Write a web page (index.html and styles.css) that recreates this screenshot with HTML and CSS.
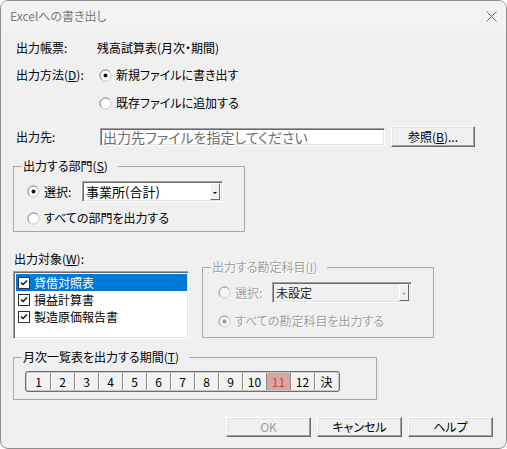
FILE: index.html
```html
<!DOCTYPE html>
<html lang="ja">
<head>
<meta charset="utf-8">
<title>Excelへの書き出し</title>
<link rel="stylesheet" href="styles.css">
</head>
<body>
<div class="window">
  <div class="titlebar">
    <span class="title">Excelへの書き出し</span>
    <svg class="close" width="11" height="11" viewBox="0 0 11 11"><path d="M0.5 0.5L10.5 10.5M10.5 0.5L0.5 10.5" stroke="#707070" stroke-width="1" fill="none"/></svg>
  </div>
  <div class="content">
    <div class="row r1"><span class="lbl">出力帳票:</span><span class="val">残高試算表(月次・期間)</span></div>
    <div class="row r2"><span class="lbl">出力方法(<u>D</u>):</span>
      <span class="radio"><svg width="13" height="13" viewBox="0 0 13 13"><circle cx="6.5" cy="6.5" r="5.5" fill="#fff" stroke="#c4c4c4"/><path d="M2.6 10.4A5.5 5.5 0 0 1 10.4 2.6" stroke="#8a8a8a" fill="none"/><circle cx="6.5" cy="6.5" r="2" fill="#111"/></svg>新規ファイルに書き出す</span></div>
    <div class="row r3"><span class="lbl"></span>
      <span class="radio"><svg width="13" height="13" viewBox="0 0 13 13"><circle cx="6.5" cy="6.5" r="5.5" fill="#fff" stroke="#c4c4c4"/><path d="M2.6 10.4A5.5 5.5 0 0 1 10.4 2.6" stroke="#8a8a8a" fill="none"/></svg>既存ファイルに追加する</span></div>
    <div class="row r4"><span class="lbl">出力先:</span>
      <div class="input sunken">出力先ファイルを指定してください</div>
      <div class="btn btn-browse">参照(<u>B</u>)...</div>
    </div>

    <fieldset class="group dept">
      <legend>出力する部門(<u>S</u>)</legend>
      <div class="gbody">
        <div class="grow combo-row">
          <span class="radio rsel"><svg width="13" height="13" viewBox="0 0 13 13"><circle cx="6.5" cy="6.5" r="5.5" fill="#fff" stroke="#c4c4c4"/><path d="M2.6 10.4A5.5 5.5 0 0 1 10.4 2.6" stroke="#8a8a8a" fill="none"/><circle cx="6.5" cy="6.5" r="2" fill="#111"/></svg>選択:</span>
          <div class="combo sunken"><span class="ctext big">事業所(合計)</span><span class="cbtn"><i class="tri"></i></span></div>
        </div>
        <div class="grow r-all">
          <span class="radio"><svg width="13" height="13" viewBox="0 0 13 13"><circle cx="6.5" cy="6.5" r="5.5" fill="#fff" stroke="#c4c4c4"/><path d="M2.6 10.4A5.5 5.5 0 0 1 10.4 2.6" stroke="#8a8a8a" fill="none"/></svg>すべての部門を出力する</span>
        </div>
      </div>
    </fieldset>

    <div class="lower">
      <div class="targets">
        <div class="tlabel">出力対象(<u>W</u>):</div>
        <div class="listbox sunken">
          <div class="item sel"><svg class="chk" width="12" height="12" viewBox="0 0 12 12"><rect x="0.5" y="0.5" width="11" height="11" fill="#fff" stroke="#333"/><path d="M3 5.5L5 7.5L9 3.5" stroke="#111" stroke-width="1.4" fill="none"/></svg>貸借対照表</div>
          <div class="item"><svg class="chk" width="12" height="12" viewBox="0 0 12 12"><rect x="0.5" y="0.5" width="11" height="11" fill="#fff" stroke="#333"/><path d="M3 5.5L5 7.5L9 3.5" stroke="#111" stroke-width="1.4" fill="none"/></svg>損益計算書</div>
          <div class="item"><svg class="chk" width="12" height="12" viewBox="0 0 12 12"><rect x="0.5" y="0.5" width="11" height="11" fill="#fff" stroke="#333"/><path d="M3 5.5L5 7.5L9 3.5" stroke="#111" stroke-width="1.4" fill="none"/></svg>製造原価報告書</div>
        </div>
      </div>
      <fieldset class="group acct disabled">
        <legend>出力する勘定科目(<u>I</u>)</legend>
        <div class="gbody">
          <div class="grow combo-row">
            <span class="radio rsel"><svg width="13" height="13" viewBox="0 0 13 13"><circle cx="6.5" cy="6.5" r="5.5" fill="#f4f4f4" stroke="#cfcfcf"/><path d="M2.6 10.4A5.5 5.5 0 0 1 10.4 2.6" stroke="#9a9a9a" fill="none"/></svg>選択:</span>
            <div class="combo sunken off"><span class="ctext">未設定</span><span class="cbtn"><i class="tri"></i></span></div>
          </div>
          <div class="grow r-all">
            <span class="radio"><svg width="13" height="13" viewBox="0 0 13 13"><circle cx="6.5" cy="6.5" r="5.5" fill="#f4f4f4" stroke="#cfcfcf"/><path d="M2.6 10.4A5.5 5.5 0 0 1 10.4 2.6" stroke="#9a9a9a" fill="none"/><circle cx="6.5" cy="6.5" r="2" fill="#9a9a9a"/></svg>すべての勘定科目を出力する</span>
          </div>
        </div>
      </fieldset>
    </div>

    <fieldset class="group period">
      <legend>月次一覧表を出力する期間(<u>T</u>)</legend>
      <div class="gbody">
        <div class="strip">
          <span class="cell">1</span><span class="cell">2</span><span class="cell">3</span><span class="cell">4</span><span class="cell">5</span><span class="cell">6</span><span class="cell">7</span><span class="cell">8</span><span class="cell">9</span><span class="cell">10</span><span class="cell cur">11</span><span class="cell">12</span><span class="cell">決</span>
        </div>
      </div>
    </fieldset>

    <div class="buttons">
      <div class="btn dbtn off">OK</div>
      <div class="btn dbtn">キャンセル</div>
      <div class="btn dbtn">ヘルプ</div>
    </div>
  </div>
</div>
</body>
</html>
```

FILE: styles.css
```css
* { box-sizing: border-box; }

body {
  margin: 0;
  background: #ffffff;
  font-family: "Noto Sans CJK JP", "Noto Sans", sans-serif;
  font-size: 12px;
  line-height: 14px;
  color: #000;
  font-feature-settings: "palt";
}

u { text-decoration: underline; text-underline-offset: 1px; }

.window {
  width: 507px;
  height: 449px;
  border: 1px solid #8f8f8f;
  border-radius: 8px;
  overflow: hidden;
  background: #f0f0f0;
  display: flex;
  flex-direction: column;
}

.titlebar {
  height: 30px;
  flex: none;
  background: #f3f3f3;
  display: flex;
  align-items: center;
  justify-content: space-between;
  padding: 0 9px 0 9px;
}

.title { color: #7a7a7a; font-size: 12px; }

.content {
  padding: 7px 13px 0 12px;
}

.row { display: flex; align-items: center; height: 20px; }
.r2 { margin-top: 7px; }
.r3 { margin-top: 8px; }
.r4 { margin-top: 13px; height: 21px; }

.lbl { width: 81px; margin-left: 3px; flex: none; }

.radio {
  display: flex;
  align-items: center;
  gap: 4px;
  margin-left: 2px;
  white-space: nowrap;
}
.radio svg { flex: none; }

.sunken {
  border: 1px solid;
  border-color: #a0a0a0 #ffffff #ffffff #a0a0a0;
  box-shadow: inset 1px 1px 0 #696969, inset -1px -1px 0 #e3e3e3;
}

.input {
  margin-left: 3px;
  width: 285px;
  height: 18px;
  background: #fff;
  color: #6d6d6d;
  font-size: 14px;
  line-height: 16px;
  padding-left: 2px;
  white-space: nowrap;
  overflow: hidden;
}

.btn {
  display: flex;
  align-items: center;
  justify-content: center;
  background: #f0f0f0;
  border: 1px solid;
  border-color: #ffffff #696969 #696969 #ffffff;
  box-shadow: inset -1px -1px 0 #a0a0a0, inset 1px 1px 0 #e3e3e3;
}

.btn-browse { margin-left: 6px; width: 84px; height: 21px; }

.group {
  margin: 0;
  padding: 0;
  border: 1px solid #a8a8a8;
  min-width: 0;
}
.group legend {
  margin-left: 8px;
  padding: 0 10px 0 1px;
  height: 14px;
  line-height: 14px;
}

.dept { margin-top: 12px; width: 232px; }
.dept .gbody { padding: 8px 0 3px 11px; }

.grow { display: flex; align-items: center; height: 20px; }
.combo-row { height: 21px; }
.r-all { margin-top: 6px; }

.rsel { width: 55px; }

.combo {
  width: 141px;
  height: 21px;
  display: flex;
  align-items: center;
  background: #fff;
  padding: 2px;
}
.ctext { flex: 1; padding-left: 1px; white-space: nowrap; }
.ctext.big { font-size: 13px; }
.cbtn {
  width: 10px;
  height: 17px;
  flex: none;
  display: flex;
  align-items: center;
  justify-content: center;
  background: #f0f0f0;
  border: 1px solid;
  border-color: #ffffff #696969 #696969 #ffffff;
}
.tri {
  display: block;
  width: 0;
  height: 0;
  margin-top: 2px;
  border-left: 2px solid transparent;
  border-right: 2px solid transparent;
  border-top: 2px solid #000;
}

.lower { display: flex; align-items: flex-start; margin-top: 20px; }

.targets { width: 176px; flex: none; }
.tlabel { margin-left: 1px; height: 14px; }
.listbox {
  margin-top: 5px;
  height: 68px;
  background: #fff;
  padding: 2px 1px 2px 2px;
}
.item {
  height: 17px;
  display: flex;
  align-items: center;
  gap: 4px;
  padding-left: 2px;
  white-space: nowrap;
}
.item.sel { background: #0078d7; color: #fff; }
.chk { flex: none; }

.acct { margin-left: 13px; margin-top: 8px; width: 232px; height: 78px; }
.acct .gbody { padding: 8px 0 6px 13px; }
.acct .r-all { margin-top: 8px; }
.acct .rsel { width: 54px; }

.disabled legend,
.disabled .radio {
  color: #a0a0a0;
  text-shadow: 1px 1px 0 #ffffff;
}

.combo.off { background: #f0f0f0; width: 140px; }
.combo.off .ctext { color: #222; }
.combo.off .tri { border-top-color: #a0a0a0; }

.period { margin-top: 11px; width: 364px; }
.period .gbody { padding: 7px 0 7px 11px; }

.strip {
  width: 315px;
  height: 21px;
  display: flex;
  border: 1px solid #6e6e6e;
  border-radius: 3px;
  padding: 1px;
  background: #c8c8c8;
}
.cell {
  flex: 1;
  display: flex;
  align-items: center;
  justify-content: center;
  background: #f2f2f2;
  border-right: 1px solid #8c8c8c;
  box-shadow: inset 1px 1px 0 #ffffff;
  font-size: 12px;
}
.cell:last-child { border-right: none; }
.cell.cur { background: #d7a69c; color: #c4484a; box-shadow: none; }

.buttons {
  display: flex;
  justify-content: flex-end;
  gap: 6px;
  margin-top: 17px;
}
.dbtn { width: 85px; height: 20px; }
.dbtn.off { color: #a0a0a0; }
```
